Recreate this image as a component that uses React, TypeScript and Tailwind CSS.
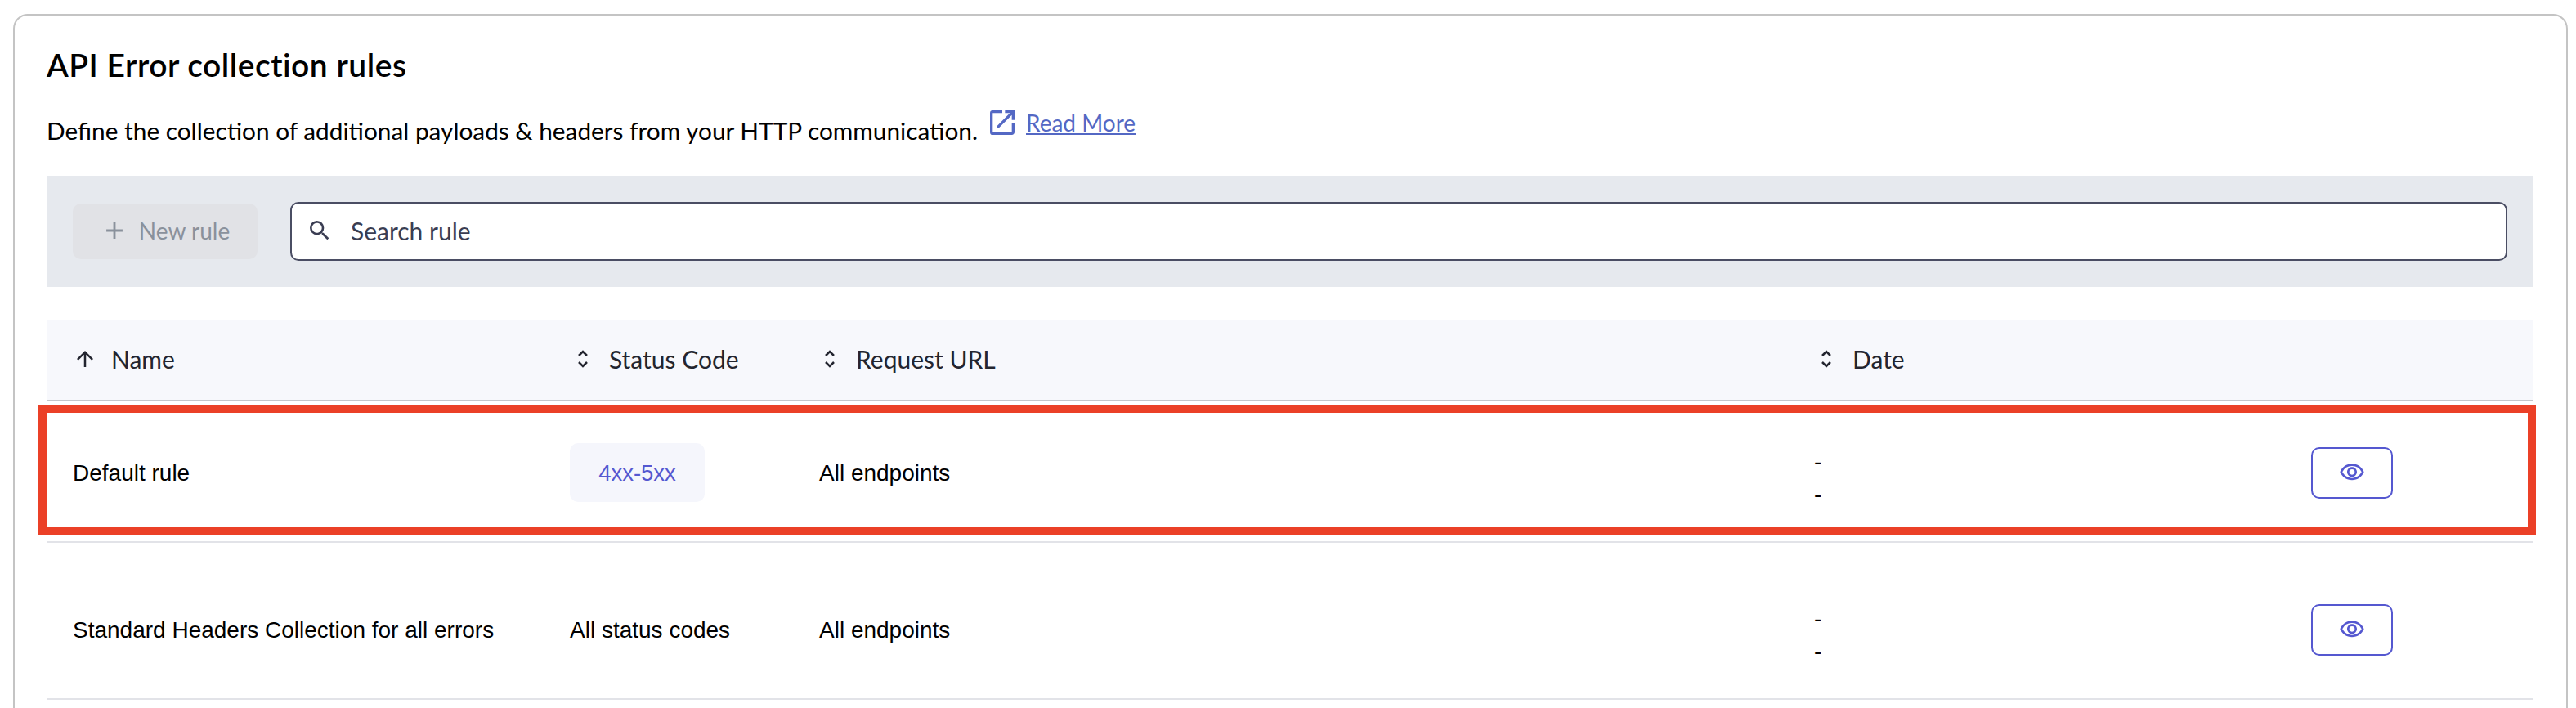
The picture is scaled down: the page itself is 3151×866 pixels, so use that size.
import { MdAdd, MdArrowUpward, MdOpenInNew, MdOutlineVisibility, MdSearch } from 'react-icons/md';

const SortIcon = () => (
  <span className="flex w-[30px] justify-center text-[#23252f]">
    <svg width="14" height="24" viewBox="0 0 14 24" fill="none" stroke="currentColor" strokeWidth="2.5">
      <path d="M2 8l5-5 5 5" />
      <path d="M2 16l5 5 5-5" />
    </svg>
  </span>
);

const HeaderCell = ({ label, icon }: { label: string; icon: React.ReactNode }) => (
  <div className="flex items-center gap-[17px] pl-8">
    {icon}
    <span>{label}</span>
  </div>
);

const EyeButton = () => (
  <button className="flex h-[63px] w-[100px] items-center justify-center rounded-[10px] border-2 border-[#5558d0] text-[#5558d0]">
    <MdOutlineVisibility size={32} />
  </button>
);

const Dashes = () => (
  <div className="mt-[14px] pl-8 leading-[40px]">
    <div>-</div>
    <div>-</div>
  </div>
);

function App() {
  return (
    <div className="h-[866px] overflow-hidden bg-white pl-[16px] pr-[10px] pt-[17px] font-['Lato',sans-serif] text-black">
      <div className="h-[900px] rounded-t-[18px] border-2 border-[#c4c4c4] pl-[39px] pr-[40px] pt-[36px]">
        <h1 className="text-[39px] font-semibold leading-[48px] tracking-[0.5px]">API Error collection rules</h1>

        <div className="mt-[33px] flex h-[48px] items-center text-[29.8px]">
          <span>Define the collection of additional payloads &amp; headers from your HTTP communication.</span>
          <span className="mb-[20px] ml-[10px] flex items-center gap-[9px] text-[28px] text-[#5468c4]">
            <MdOpenInNew size={40} />
            <a className="underline">Read More</a>
          </span>
        </div>

        {/* Toolbar */}
        <div className="mt-[31px] flex h-[136px] items-center gap-[40px] bg-[#e6e9ee] px-[32px]">
          <button className="flex h-[68px] w-[226px] items-center justify-center gap-[13px] rounded-[10px] bg-[#e1e2e6] pb-[2px] text-[28px] text-[#8a919c]">
            <MdAdd size={34} />
            New rule
          </button>
          <div className="flex h-[72px] flex-1 items-center gap-[22px] rounded-[10px] border-2 border-[#4a4d63] bg-white pb-[2px] pl-[18px] text-[30px] text-[#3a3d52]">
            <MdSearch size={32} />
            Search rule
          </div>
        </div>

        {/* Table */}
        <div className="mt-[40px] grid h-[100px] grid-cols-[609px_302px_1219px_1fr] border-b-2 border-[#c4c5ca] bg-[#f7f8fc] pb-[2px] text-[30px] text-[#23252f]">
          <HeaderCell label="Name" icon={<span className="flex w-[30px] justify-center"><MdArrowUpward size={32} /></span>} />
          <HeaderCell label="Status Code" icon={<SortIcon />} />
          <HeaderCell label="Request URL" icon={<SortIcon />} />
          <HeaderCell label="Date" icon={<SortIcon />} />
        </div>

        <div className="relative grid h-[173px] grid-cols-[608px_305px_1217px_640px_1fr] items-center border-b-2 border-[#e2e3e8] pt-[3px] font-['Liberation_Sans',sans-serif] text-[28px]">
          <div className="pl-8 pt-[2px]">Default rule</div>
          <div className="pl-8">
            <span className="inline-flex h-[72px] w-[165px] items-center justify-center rounded-[10px] bg-[#f5f6fc] pt-[2px] text-[27.5px] text-[#5558d0]">4xx-5xx</span>
          </div>
          <div className="pl-8 pt-[2px]">All endpoints</div>
          <Dashes />
          <EyeButton />
          <div className="absolute -left-[10px] -right-[3px] bottom-[7px] top-[4px] border-[10px] border-[#eb4027]" />
        </div>

        <div className="grid h-[192px] grid-cols-[608px_305px_1217px_640px_1fr] items-center border-b-2 border-[#e2e3e8] pt-[22px] font-['Liberation_Sans',sans-serif] text-[28px]">
          <div className="pl-8 pt-[2px]">Standard Headers Collection for all errors</div>
          <div className="pl-8 pt-[2px]">All status codes</div>
          <div className="pl-8 pt-[2px]">All endpoints</div>
          <Dashes />
          <EyeButton />
        </div>
      </div>
    </div>
  );
}

export default App;
